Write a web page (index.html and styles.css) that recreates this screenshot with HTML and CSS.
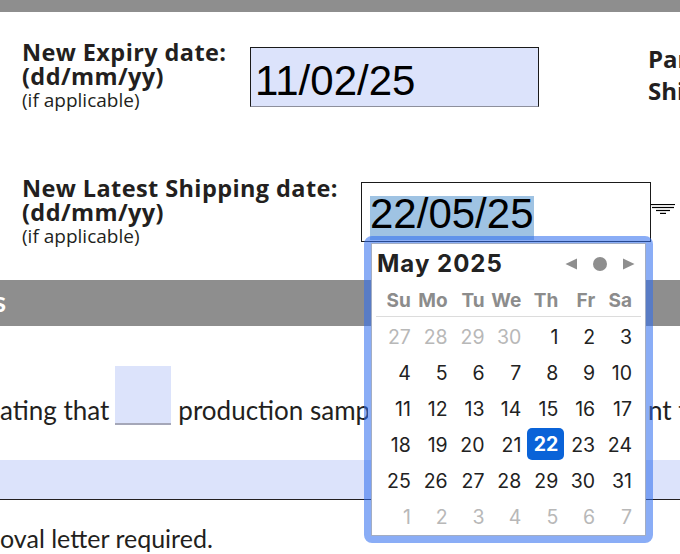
FILE: index.html
```html
<!DOCTYPE html>
<html>
<head>
<meta charset="utf-8">
<link rel="stylesheet" href="styles.css">
</head>
<body>
<div class="topbar"></div>

<div class="field-row row1">
  <div class="label">
    <div class="l-main">New Expiry date:</div>
    <div class="l-main">(dd/mm/yy)</div>
    <div class="l-sub">(if applicable)</div>
  </div>
  <div class="input input-filled">11/02/25</div>
  <div class="side-label">Partial<br>Shipment</div>
</div>

<div class="field-row row2">
  <div class="label">
    <div class="l-main">New Latest Shipping date:</div>
    <div class="l-main">(dd/mm/yy)</div>
    <div class="l-sub">(if applicable)</div>
  </div>
  <div class="input input-plain"><span class="sel">22/05/25</span></div>
  <svg class="dd-icon" width="24" height="10" viewBox="0 0 24 10">
    <line x1="0" y1="0.5" x2="24" y2="0.5" stroke="#000" stroke-width="1.2"/>
    <line x1="1" y1="3.5" x2="23" y2="3.5" stroke="#000" stroke-width="1.2"/>
    <line x1="5" y1="6.5" x2="19" y2="6.5" stroke="#000" stroke-width="1.2"/>
    <line x1="9" y1="9.4" x2="15" y2="9.4" stroke="#000" stroke-width="1.2"/>
  </svg>
</div>

<div class="band"><div class="band-title">Approvals</div></div>

<div class="text-line">
  <div class="tl-left">
    <span class="tl-text">ating that</span>
    <span class="blank"></span>
    <span class="tl-text">production samples of the shipment</span>
  </div>
  <span class="tl-text tl-right">nt to</span>
</div>

<div class="blue-band"></div>

<div class="last-line">oval letter required.</div>

<div class="calendar">
  <div class="cal-inner">
    <div class="cal-head">
      <div class="cal-title">May 2025</div>
      <svg class="cal-nav" width="70" height="14" viewBox="0 0 70 14">
        <path d="M12 1.5 L12 12.5 L0.5 7 Z" fill="#8e8e8e"/>
        <circle cx="35" cy="7" r="7" fill="#8e8e8e"/>
        <path d="M58 1.5 L58 12.5 L69.5 7 Z" fill="#8e8e8e"/>
      </svg>
    </div>
    <div class="cal-grid cal-week">
      <div class="wd">Su</div><div class="wd">Mo</div><div class="wd">Tu</div><div class="wd">We</div><div class="wd">Th</div><div class="wd">Fr</div><div class="wd">Sa</div>
    </div>
    <div class="cal-sep"></div>
    <div class="cal-grid cal-days">
      <div class="d out">27</div><div class="d out">28</div><div class="d out">29</div><div class="d out">30</div><div class="d">1</div><div class="d">2</div><div class="d">3</div>
      <div class="d">4</div><div class="d">5</div><div class="d">6</div><div class="d">7</div><div class="d">8</div><div class="d">9</div><div class="d">10</div>
      <div class="d">11</div><div class="d">12</div><div class="d">13</div><div class="d">14</div><div class="d">15</div><div class="d">16</div><div class="d">17</div>
      <div class="d">18</div><div class="d">19</div><div class="d">20</div><div class="d">21</div><div class="d"><span class="today">22</span></div><div class="d">23</div><div class="d">24</div>
      <div class="d">25</div><div class="d">26</div><div class="d">27</div><div class="d">28</div><div class="d">29</div><div class="d">30</div><div class="d">31</div>
      <div class="d out">1</div><div class="d out">2</div><div class="d out">3</div><div class="d out">4</div><div class="d out">5</div><div class="d out">6</div><div class="d out">7</div>
    </div>
  </div>
</div>
</body>
</html>
```

FILE: styles.css
```css
html, body {
  margin: 0;
  padding: 0;
  overflow: hidden;
  background: #fff;
}
body {
  width: 680px;
  height: 554px;
  position: relative;
  font-family: Lato, "Noto Sans", sans-serif;
  color: #231f20;
}
.topbar {
  height: 12px;
  background: #8e8e8e;
}
.field-row {
  display: flex;
  align-items: flex-start;
  padding-left: 22px;
}
.row1 { margin-top: 28px; }
.row2 { margin-top: 64px; }
.label {
  flex: 0 0 auto;
  font-family: "Open Sans", Lato, sans-serif;
}
.row1 .label { width: 228px; }
.row2 .label { width: 339px; }
.l-main {
  font-weight: 700;
  font-size: 23.5px;
  letter-spacing: 0.4px;
  line-height: 24px;
  white-space: nowrap;
}
.l-sub {
  font-size: 19px;
  line-height: 24px;
  white-space: nowrap;
}
.input {
  box-sizing: border-box;
  height: 60px;
  border: 1px solid #1a1a1a;
  font-family: "Liberation Sans", Arial, sans-serif;
  font-size: 42px;
  color: #000;
  flex: 0 0 auto;
  white-space: nowrap;
}
.input-filled {
  width: 289px;
  margin-top: 7px;
  background: #dce3fb;
  border-bottom-color: #8d8f9c;
  padding: 9px 0 0 4px;
  line-height: normal;
}
.input-plain {
  width: 290px;
  margin-top: 6px;
  background: #fff;
  padding: 13px 0 0 8px;
}
.sel {
  display: inline-block;
  box-sizing: border-box;
  height: 44px;
  line-height: 36px;
  background: #9fc3e3;
  vertical-align: top;
}
.side-label {
  flex: 0 0 auto;
  margin-left: 109px;
  margin-top: 3px;
  font-family: "Open Sans", Lato, sans-serif;
  font-weight: 700;
  font-size: 24px;
  line-height: 32px;
  white-space: nowrap;
}
.dd-icon {
  flex: 0 0 auto;
  display: block;
  margin-top: 28px;
}
.band {
  margin-top: 32px;
  height: 46px;
  background: #8e8e8e;
  line-height: 42px;
}
.band-title {
  width: 6px;
  overflow: hidden;
  display: flex;
  justify-content: flex-end;
  white-space: nowrap;
  color: #fff;
  font-weight: 700;
  font-size: 28px;
}
.text-line {
  margin-top: 40px;
  display: flex;
  align-items: flex-end;
  font-size: 26px;
  line-height: 30px;
  white-space: nowrap;
}
.tl-left {
  flex: 0 0 368px;
  width: 368px;
  display: flex;
  align-items: flex-end;
  overflow: hidden;
}
.tl-text { flex: 0 0 auto; }
.tl-right { margin-left: 280px; }
.blank {
  flex: 0 0 auto;
  box-sizing: border-box;
  width: 56px;
  height: 59px;
  margin: 0 7px 0 6px;
  background: #dce3fb;
  border-bottom: 2px solid #a5a7b8;
}
.blue-band {
  margin-top: 35px;
  height: 39px;
  background: #dce3fb;
  border-bottom: 1px solid #231f20;
}
.last-line {
  margin-top: 23px;
  font-size: 25px;
  line-height: 30px;
  white-space: nowrap;
}
.calendar {
  position: absolute;
  left: 364px;
  top: 236px;
  width: 289px;
  height: 307px;
  box-sizing: border-box;
  border: 7px solid rgba(50, 110, 240, 0.57);
  border-radius: 8px;
  font-family: Inter, Roboto, sans-serif;
}
.cal-inner {
  box-sizing: border-box;
  height: 100%;
  border: 1px solid #a3adc2;
  background: #fff;
}
.cal-head {
  display: flex;
  justify-content: space-between;
  align-items: center;
  margin-top: 6px;
  padding: 0 10px 0 5px;
  height: 28px;
}
.cal-title {
  font-weight: 700;
  font-size: 24px;
  letter-spacing: 1px;
  line-height: 28px;
  color: #222;
}
.cal-nav { display: block; }
.cal-grid {
  display: grid;
  grid-template-columns: repeat(7, 1fr);
  width: 258px;
  margin-left: 8px;
}
.cal-week {
  margin-top: 12px;
}
.wd {
  text-align: right;
  padding-right: 6px;
  font-weight: 700;
  font-size: 19px;
  line-height: 22px;
  color: #8c8c8c;
}
.cal-sep {
  margin: 4px 4px 0 4px;
  height: 1px;
  background: #dcdcdc;
}
.cal-days {
  margin-top: 2px;
}
.d {
  height: 36px;
  display: flex;
  justify-content: flex-end;
  align-items: center;
  padding-right: 6px;
  font-size: 19.5px;
  line-height: 36px;
  color: #222;
}
.d.out { color: #b8b8b8; }
.today {
  display: block;
  box-sizing: border-box;
  width: 37px;
  height: 32px;
  margin-right: -6px;
  margin-top: -2px;
  padding-right: 6px;
  line-height: 32px;
  text-align: right;
  background: #0a63d8;
  color: #fff;
  font-weight: 700;
  border-radius: 5px;
}
```
